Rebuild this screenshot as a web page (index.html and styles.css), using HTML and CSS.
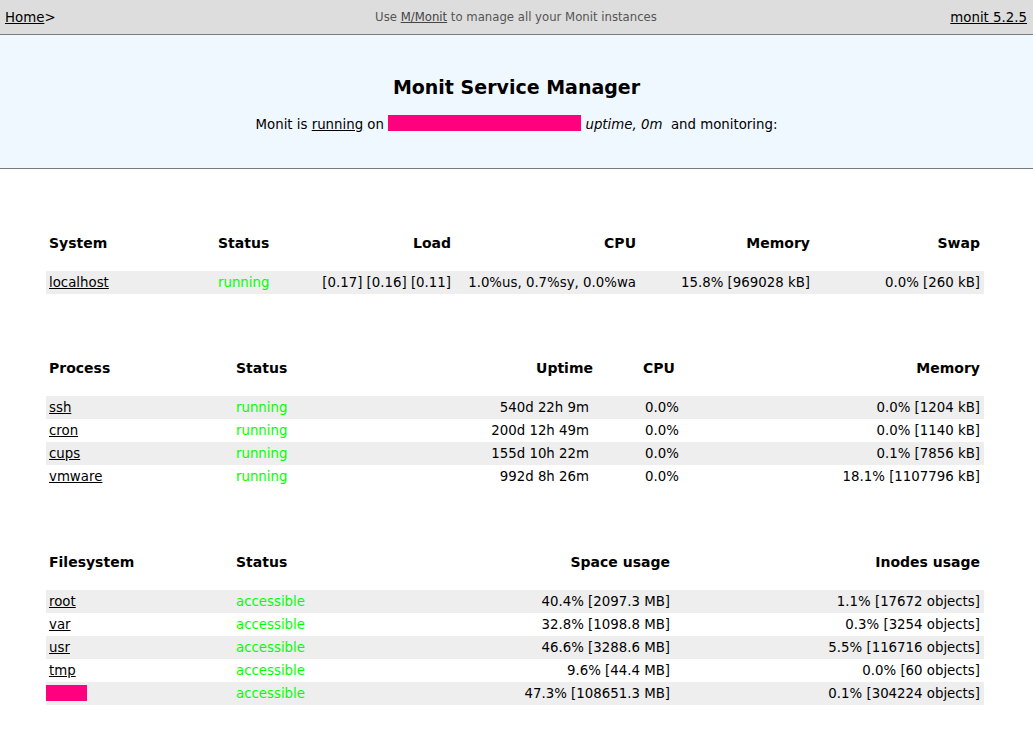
FILE: index.html
```html
<!DOCTYPE html>
<html>
<head>
<meta charset="utf-8">
<title>Monit: localhost</title>
<link rel="stylesheet" href="styles.css">
</head>
<body>
<div class="topbar">
  <div class="crumbs"><a href="#">Home</a>&gt;</div>
  <div class="promo">Use <a href="#">M/Monit</a> to manage all your Monit instances</div>
  <div class="version"><a href="#">monit 5.2.5</a></div>
</div>
<div class="banner">
  <h1 class="title">Monit Service Manager</h1>
  <p class="subtitle">Monit is <a href="#">running</a> on <span class="redact host"></span> <i>uptime, 0m</i>&nbsp; and monitoring:</p>
</div>
<div class="content">
  <table class="grid sys">
    <colgroup><col class="w169"><col class="w100"><col class="w140"><col class="w185"><col class="w174"><col class="w170"></colgroup>
    <tr><th class="l">System</th><th class="l">Status</th><th class="r">Load</th><th class="r">CPU</th><th class="r">Memory</th><th class="r">Swap</th></tr>
    <tr class="stripe"><td class="l"><a href="#">localhost</a></td><td class="l ok">running</td><td class="r">[0.17]&nbsp;[0.16]&nbsp;[0.11]</td><td class="r">1.0%us,&nbsp;0.7%sy,&nbsp;0.0%wa</td><td class="r">15.8% [969028 kB]</td><td class="r">0.0% [260 kB]</td></tr>
  </table>

  <table class="grid proc">
    <colgroup><col class="w187"><col class="w167"><col class="w240"><col class="w80"><col class="w264"></colgroup>
    <tr><th class="l">Process</th><th class="l">Status</th><th class="r upt">Uptime</th><th class="l">CPU</th><th class="r">Memory</th></tr>
    <tr class="stripe"><td class="l"><a href="#">ssh</a></td><td class="l ok">running</td><td class="r upt">540d 22h 9m</td><td class="l cpu">0.0%</td><td class="r">0.0% [1204 kB]</td></tr>
    <tr><td class="l"><a href="#">cron</a></td><td class="l ok">running</td><td class="r upt">200d 12h 49m</td><td class="l cpu">0.0%</td><td class="r">0.0% [1140 kB]</td></tr>
    <tr class="stripe"><td class="l"><a href="#">cups</a></td><td class="l ok">running</td><td class="r upt">155d 10h 22m</td><td class="l cpu">0.0%</td><td class="r">0.1% [7856 kB]</td></tr>
    <tr><td class="l"><a href="#">vmware</a></td><td class="l ok">running</td><td class="r upt">992d 8h 26m</td><td class="l cpu">0.0%</td><td class="r">18.1% [1107796 kB]</td></tr>
  </table>

  <table class="grid fs">
    <colgroup><col class="w187"><col class="w167"><col class="w274"><col class="w310"></colgroup>
    <tr><th class="l">Filesystem</th><th class="l">Status</th><th class="r">Space usage</th><th class="r">Inodes usage</th></tr>
    <tr class="stripe"><td class="l"><a href="#">root</a></td><td class="l ok">accessible</td><td class="r">40.4% [2097.3 MB]</td><td class="r">1.1% [17672 objects]</td></tr>
    <tr><td class="l"><a href="#">var</a></td><td class="l ok">accessible</td><td class="r">32.8% [1098.8 MB]</td><td class="r">0.3% [3254 objects]</td></tr>
    <tr class="stripe"><td class="l"><a href="#">usr</a></td><td class="l ok">accessible</td><td class="r">46.6% [3288.6 MB]</td><td class="r">5.5% [116716 objects]</td></tr>
    <tr><td class="l"><a href="#">tmp</a></td><td class="l ok">accessible</td><td class="r">9.6% [44.4 MB]</td><td class="r">0.0% [60 objects]</td></tr>
    <tr class="stripe"><td class="l flush"><span class="redact name"></span></td><td class="l ok">accessible</td><td class="r">47.3% [108651.3 MB]</td><td class="r">0.1% [304224 objects]</td></tr>
  </table>
</div>
</body>
</html>
```

FILE: styles.css
```css
html, body {
  margin: 0;
  padding: 0;
  background: #ffffff;
}
body {
  font-family: "DejaVu Sans", "Liberation Sans", sans-serif;
  font-size: 13.33px;
  color: #000000;
}
a {
  color: #000000;
  text-decoration: underline;
}

.topbar {
  display: grid;
  grid-template-columns: 1fr auto 1fr;
  align-items: center;
  height: 34px;
  background: #dddddd;
  border-bottom: 1px solid #7a7a7a;
  padding: 0 6px 0 5px;
}
.crumbs {
  justify-self: start;
}
.promo {
  font-size: 11.7px;
  color: #555555;
}
.promo a {
  color: #444444;
}
.version {
  justify-self: end;
}

.banner {
  height: 134px;
  background: #f0f8ff;
  border-bottom: 1px solid #7a7a7a;
  text-align: center;
  box-sizing: border-box;
  padding-top: 39px;
}
.title {
  margin: 0;
  font-size: 19px;
  line-height: 26px;
  font-weight: bold;
}
.subtitle {
  margin: 15px 0 0 0;
  line-height: 20px;
}
.redact {
  display: inline-block;
  background: #ff007f;
  height: 16px;
  vertical-align: -2px;
}
.redact.host {
  width: 193px;
}
.redact.name {
  width: 41px;
  vertical-align: -3px;
}

.content {
  padding: 0 0 20px 46px;
}
.grid {
  table-layout: fixed;
  width: 938px;
  border-collapse: collapse;
  border-spacing: 0;
  margin-top: 62px;
}
.grid th {
  font-size: 14px;
  font-weight: bold;
  line-height: 23px;
  padding: 1px 4px 16px 3px;
  white-space: nowrap;
}
.grid td {
  line-height: 23px;
  height: 23px;
  padding: 0 4px 0 3px;
  white-space: nowrap;
}
.grid .l { text-align: left; }
.grid .r { text-align: right; }
.grid tr.stripe td { background: #eeeeee; }
.grid .ok { color: #00ff00; }
.grid td.flush { padding-left: 0; }

.proc th.upt { padding-right: 47px; }
.proc td.upt { padding-right: 51px; }
.proc td.cpu { padding-left: 5px; }

col.w100 { width: 100px; }
col.w140 { width: 140px; }
col.w167 { width: 167px; }
col.w169 { width: 169px; }
col.w170 { width: 170px; }
col.w174 { width: 174px; }
col.w185 { width: 185px; }
col.w187 { width: 187px; }
col.w240 { width: 240px; }
col.w264 { width: 264px; }
col.w274 { width: 274px; }
col.w310 { width: 310px; }
col.w80 { width: 80px; }
```
